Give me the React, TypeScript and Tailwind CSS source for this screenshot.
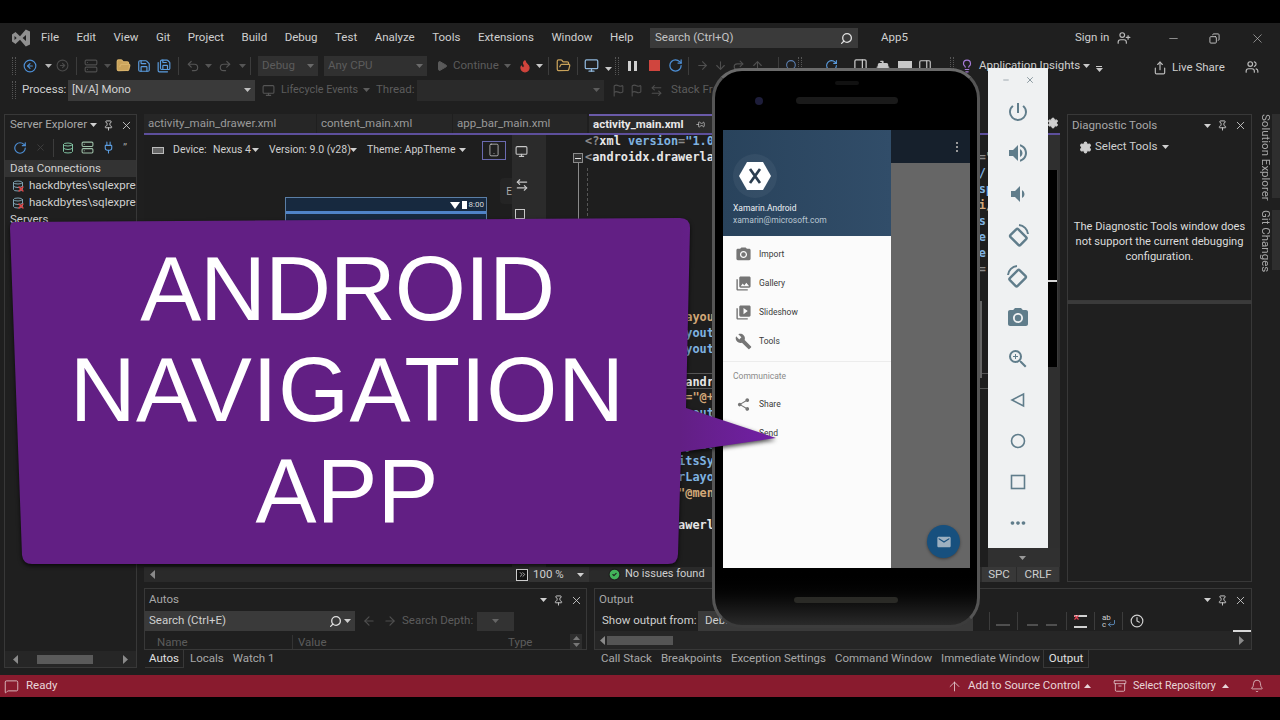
import React from "react";
import {
  CircleArrowLeft,
  CircleArrowRight,
  FolderOpen,
  Save,
  SaveAll,
  Undo2,
  Redo2,
  Play,
  RotateCw,
  Search,
  Pin,
  X,
  Minus,
  Copy,
  ArrowRight,
  ArrowLeft,
  ArrowUp,
  ArrowDown,
  Settings,
  Smartphone,
  Flame,
  Lightbulb,
  Share,
  UserPlus,
  Users,
  Clock,
  Bell,
  MessageSquare,
  Archive,
  CircleCheck,
  Database,
  Monitor,
  Flag,
  ArrowLeftRight,
  ChevronsRight,
  Server,
  Plug,
  Bot,
  PanelRight,
  CornerDownLeft,
} from "lucide-react";
import {
  MdPhotoCamera,
  MdPhotoLibrary,
  MdVideoLibrary,
  MdBuild,
  MdShare,
  MdEmail,
  MdPowerSettingsNew,
  MdVolumeUp,
  MdVolumeDown,
  MdZoomIn,
  MdMoreHoriz,
} from "react-icons/md";

function Caret({ className = "text-[#b5b5b5]", up = false }: { className?: string; up?: boolean }) {
  return (
    <svg width="7" height="4" viewBox="0 0 7 4" className={`shrink-0 ${className}`}>
      <path d={up ? "M0 4 3.5 0 7 4Z" : "M0 0h7L3.5 4Z"} fill="currentColor" />
    </svg>
  );
}

function ArrowSide({ left = false }: { left?: boolean }) {
  return (
    <svg width="5" height="9" viewBox="0 0 5 9" className="text-[#8a8a8a] shrink-0">
      <path d={left ? "M5 0v9L0 4.5Z" : "M0 0v9l5-4.5Z"} fill="currentColor" />
    </svg>
  );
}

function VsLogo() {
  return (
    <svg width="20" height="20" viewBox="0 0 20 20" className="text-[#8f8f8f]">
      <path
        fillRule="evenodd"
        fill="currentColor"
        d="M1 6.5 4.500 4 9 8.200 14.800 1.500 19 3.500v13l-4.200 2L9 11.800 4.500 16 1 13.500ZM3.500 8v4l2.200-2ZM15 7l-3.400 3 3.400 3Z"
      />
    </svg>
  );
}

function Grip() {
  return <div className="w-[4px] h-[18px] border-x border-dotted border-[#555] shrink-0" />;
}

function Sep() {
  return <div className="w-px h-[18px] bg-[#3c3c3c] shrink-0" />;
}

function PanelTools() {
  return (
    <div className="flex items-center gap-[6px] text-[#d0d0d0]">
      <Caret className="text-[#d0d0d0]" />
      <Pin size={11} />
      <X size={13} strokeWidth={1.6} />
    </div>
  );
}

function MenuBar() {
  const items = ["File", "Edit", "View", "Git", "Project", "Build", "Debug", "Test", "Analyze", "Tools", "Extensions", "Window", "Help"];
  return (
    <div className="h-[29px] pt-[1px] flex items-center pl-[11px] shrink-0">
      <VsLogo />
      <div className="w-[609px] ml-[10px] flex gap-[17.5px] text-[#cfcfcf]">
        {items.map((m) => (
          <span key={m}>{m}</span>
        ))}
      </div>
      <div className="w-[208px] h-[20px] bg-[#3a3a3a] flex items-center justify-between px-[5px] text-[#c4c4c4]">
        <span>Search (Ctrl+Q)</span>
        <Search size={13} className="text-[#e0e0e0] -scale-x-100" strokeWidth={2.4} />
      </div>
      <span className="ml-[23px] w-[40px] text-[#cfcfcf]">App5</span>
      <span className="ml-[154px] w-[34px] text-[#cfcfcf]">Sign in</span>
      <UserPlus size={14} className="ml-[8px] text-[#bcbcbc]" />
      <Minus size={13} className="ml-[36px] text-[#c8c8c8]" strokeWidth={1.2} />
      <Copy size={11} className="ml-[29px] text-[#c8c8c8] -scale-x-100" />
      <X size={15} className="ml-[30px] text-[#c8c8c8]" strokeWidth={1} />
    </div>
  );
}

function DebugBar() {
  return (
    <div className="h-[27px] flex items-center pl-[12px] shrink-0">
      <Grip />
      <CircleArrowLeft size={14} className="ml-[7px] text-[#4d8fd6]" />
      <Caret className="ml-[8px] text-[#b5b5b5]" />
      <CircleArrowRight size={13} className="ml-[4px] text-[#4a4a4a]" />
      <div className="ml-[7px]"><Sep /></div>
      <Server size={14} className="ml-[7px] text-[#4f4f4f]" />
      <Caret className="ml-[6px] text-[#4f4f4f]" />
      <FolderOpen size={15} className="ml-[5px] text-[#d8b26a]" fill="#c9a25a" />
      <Save size={14} className="ml-[6px] text-[#5b9de0]" />
      <SaveAll size={14} className="ml-[6px] text-[#5b9de0]" />
      <div className="ml-[7px]"><Sep /></div>
      <Undo2 size={14} className="ml-[7px] text-[#555]" />
      <Caret className="ml-[5px] text-[#555]" />
      <Redo2 size={14} className="ml-[6px] text-[#555]" />
      <Caret className="ml-[7px] text-[#555]" />
      <div className="ml-[4px]"><Sep /></div>
      <div className="ml-[7px] w-[60px] h-[20px] bg-[#303030] flex items-center justify-between px-[4px] text-[#5c5c5c]">
        <span>Debug</span>
        <Caret className="text-[#6a6a6a]" />
      </div>
      <div className="ml-[6px] w-[103px] h-[20px] bg-[#303030] flex items-center justify-between px-[4px] text-[#5c5c5c]">
        <span>Any CPU</span>
        <Caret className="text-[#6a6a6a]" />
      </div>
      <Play size={12} className="ml-[9px] text-[#5a5a5a]" fill="currentColor" />
      <span className="ml-[5px] w-[46px] text-[#5c5c5c]">Continue</span>
      <Caret className="ml-[5px] text-[#5c5c5c]" />
      <Flame size={14} className="ml-[7px] text-[#d0443c]" fill="#d0443c" />
      <Caret className="ml-[4px] text-[#c8c8c8]" />
      <div className="ml-[5px]"><Sep /></div>
      <FolderOpen size={15} className="ml-[7px] text-[#c9a25a]" />
      <div className="ml-[6px]"><Sep /></div>
      <Monitor size={15} className="ml-[6px] text-[#8fb7dc]" />
      <Caret className="ml-[6px] mt-[6px] text-[#c8c8c8]" />
      <div className="ml-[3px]"><Grip /></div>
      <div className="ml-[9px] w-[3px] h-[10px] bg-[#d0d0d0] shadow-[6px_0_0_#d0d0d0]" />
      <div className="ml-[18px] w-[11px] h-[11px] bg-[#d0453e]" />
      <RotateCw size={15} className="ml-[8px] text-[#4d8fd6]" />
      <div className="ml-[5px]"><Sep /></div>
      <ArrowRight size={13} className="ml-[7px] text-[#4f4f4f]" />
      <ArrowDown size={13} className="ml-[5px] text-[#4f4f4f]" />
      <Redo2 size={13} className="ml-[5px] text-[#4f4f4f]" />
      <ArrowUp size={13} className="ml-[6px] text-[#4f4f4f]" />
      <div className="ml-[14px]"><Sep /></div>
      <Search size={13} className="ml-[6px] text-[#5b7fb0]" />
      <Grip />
      <RotateCw size={13} className="ml-[23px] text-[#5b9de0]" />
      <PanelRight size={15} className="ml-[15px] text-[#c8c8c8]" />
      <Bot size={14} className="ml-[8px] text-[#c8c8c8]" fill="currentColor" />
      <div className="ml-[8px] w-[14px] h-[9px] bg-[#c8c8c8]" />
      <PanelRight size={14} className="ml-[6px] text-[#c8c8c8]" />
      <div className="ml-[18px]"><Grip /></div>
      <Lightbulb size={14} className="ml-[6px] text-[#a77bd8]" />
      <span className="ml-[5px] w-[99px] text-[#cfcfcf]">Application Insights</span>
      <Caret className="ml-[5px] text-[#c8c8c8]" />
      <div className="ml-[6px] mt-[6px] w-[6px] h-[5px] border-t border-[#c8c8c8] flex justify-center"><Caret className="mt-[1px] text-[#c8c8c8]" /></div>
      <Share size={14} className="ml-[51px] mt-[4px] text-[#bcbcbc]" />
      <span className="ml-[5px] mt-[4px] w-[50px] text-[#cfcfcf]">Live Share</span>
      <Users size={14} className="ml-[23px] mt-[2px] text-[#bcbcbc]" />
    </div>
  );
}

function ProcessBar() {
  return (
    <div className="h-[22px] flex items-center pl-[12px] shrink-0">
      <Grip />
      <span className="ml-[6px] w-[40px] text-[#cfcfcf]">Process:</span>
      <div className="ml-[6px] w-[187px] h-[21px] bg-[#3a3a3a] flex items-center justify-between px-[4px] text-[#d0d0d0]">
        <span>[N/A] Mono</span>
        <Caret className="text-[#c0c0c0]" />
      </div>
      <Monitor size={13} className="ml-[7px] text-[#555]" />
      <span className="ml-[6px] w-[77px] text-[#5c5c5c] text-[10.8px]">Lifecycle Events</span>
      <Caret className="ml-[5px] text-[#5c5c5c]" />
      <span className="ml-[6px] w-[36px] text-[#5c5c5c]">Thread:</span>
      <div className="ml-[5px] w-[187px] h-[21px] bg-[#2a2a2a] flex items-center justify-end px-[4px]">
        <Caret className="text-[#5c5c5c]" />
      </div>
      <Flag size={13} className="ml-[8px] text-[#4f4f4f]" />
      <Flag size={13} className="ml-[5px] text-[#4f4f4f]" />
      <ArrowLeftRight size={13} className="ml-[7px] text-[#4f4f4f]" />
      <span className="ml-[8px] text-[#5c5c5c]">Stack Frame:</span>
    </div>
  );
}

function ServerExplorer() {
  return (
    <div className="w-[133px] ml-[4px] border border-[#383838] flex flex-col">
      <div className="h-[20px] flex items-center justify-between pl-[5px] pr-[3px] text-[#a8a8a8]">
        <span>Server Explorer</span>
        <PanelTools />
      </div>
      <div className="h-[25px] flex items-center pl-[8px]">
        <RotateCw size={14} className="text-[#4d8fd6]" />
        <X size={11} className="ml-[8px] text-[#3f3f3f]" />
        <div className="ml-[7px]"><Sep /></div>
        <Database size={12} className="ml-[8px] text-[#7fc0a0]" />
        <Server size={13} className="ml-[7px] text-[#9ec0a8]" />
        <Plug size={13} className="ml-[8px] text-[#5b9de0]" />
        <span className="ml-[8px] text-[#999] leading-none">”</span>
      </div>
      <div className="h-[17px] bg-[#333] flex items-center pl-[5px] text-[#d0d0d0]">Data Connections</div>
      {["a", "b"].map((key) => (
        <div key={key} className="h-[17px] flex items-center pl-[7px] gap-[5px] text-[#d0d0d0] whitespace-nowrap overflow-hidden">
          <div className="relative shrink-0">
            <Database size={12} className="text-[#7da0b0]" />
            <X size={8} className="absolute left-[5px] top-[5px] text-[#e04040]" strokeWidth={4} />
          </div>
          <span>hackdbytes\sqlexpress</span>
        </div>
      ))}
      <div className="h-[17px] flex items-center pl-[5px] text-[#d0d0d0]">Servers</div>
      <div className="flex-1" />
      <div className="h-[16px] bg-[#262626] flex items-center px-[8px]">
        <ArrowSide left />
        <div className="ml-[19px] w-[56px] h-[9px] bg-[#5a5a5a]" />
        <div className="flex-1" />
        <ArrowSide />
      </div>
    </div>
  );
}

function EditorTabs() {
  return (
    <div className="h-[19px] flex text-[#9a9a9a] shrink-0">
      <div className="w-[172px] bg-[#262626] pl-[4px] flex items-center">activity_main_drawer.xml</div>
      <div className="w-[135px] ml-px bg-[#262626] pl-[4px] flex items-center">content_main.xml</div>
      <div className="w-[134px] ml-px bg-[#262626] pl-[4px] flex items-center">app_bar_main.xml</div>
      <div className="ml-[2px] w-[150px] border-t-2 border-[#6a5aa8] bg-[#2a2a2a] pl-[4px] flex items-center gap-[12px] text-[#e8e8e8] font-bold">
        <span>activity_main.xml</span>
        <Pin size={9} className="rotate-90 text-[#c0c0c0]" />
        <X size={10} />
      </div>
      <div className="flex-1" />
      <Settings size={12} className="mt-[3px] mr-[1px] text-[#cfcfcf]" fill="currentColor" />
    </div>
  );
}

function Designer() {
  return (
    <div className="w-[368px] flex flex-col shrink-0 overflow-hidden">
      <div className="h-[30px] flex items-center pl-[8px] text-[#cfcfcf] text-[10.5px] shrink-0">
        <div className="w-[12px] h-[7px] border border-[#bbb] bg-[#666] shrink-0" />
        <span className="ml-[9px] w-[35px]">Device:</span>
        <span className="ml-[5px] w-[34px]">Nexus 4</span>
        <Caret className="ml-[5px] text-[#cfcfcf]" />
        <span className="ml-[10px] w-[76px]">Version: 9.0 (v28)</span>
        <Caret className="ml-[5px] text-[#cfcfcf]" />
        <span className="ml-[10px] w-[88px]">Theme: AppTheme</span>
        <Caret className="ml-[4px] text-[#cfcfcf]" />
        <div className="ml-[16px] w-[24px] h-[19px] border border-[#6a6ab0] flex items-center justify-center shrink-0">
          <Smartphone size={14} className="text-[#d0d0d0]" strokeWidth={1.3} />
        </div>
      </div>
      <div className="ml-[141px] mt-[32px] w-[202px] h-[180px] bg-[#17293f] border border-[#5a7ea6] pt-[1px]">
        <div className="h-[12px] flex items-center justify-end gap-[2px] pr-[2px] text-[8px] text-[#d8d8d8]">
          <svg width="10" height="7" viewBox="0 0 10 7"><path d="M0 0h10L5 7Z" fill="#fff" /></svg>
          <div className="w-[5px] h-[8px] bg-[#fff]" />
          <span>8:00</span>
        </div>
        <div className="h-[3px] bg-[#4f83c8]" />
      </div>
    </div>
  );
}

function DesignerTools() {
  return (
    <div className="relative w-[34px] bg-[#2b2b2b] flex flex-col pt-[10px] pl-[3px] shrink-0 text-[#c8c8c8]">
      <Monitor size={13} />
      <ArrowLeftRight size={14} className="mt-[20px]" />
      <div className="mt-[17px] w-[10px] h-[10px] border border-[#c8c8c8]" />
      <div className="absolute -left-[12px] top-[43px] w-[12px] h-[26px] rounded-l-[4px] bg-[#242424] flex items-center justify-end text-[#aaa] text-[10px]">E</div>
    </div>
  );
}

type Seg = [string, string];

const k = "text-[#e6e6e6]";
const a = "text-[#d2a878]";
const b = "text-[#7fb2e0]";
const g = "text-[#8a8a8a]";
const pad = " ".repeat(55);

const codeLines: Seg[][] = [
  [["<?", g], ["xml ", k], ["version", b], ["=", g], ['"1.0"', b]],
  [["<", g], ["androidx.drawerlayout.widget.DrawerLayout", k], ["xmlns:android", b], ["=", g], ['"http://schemas.android.com', a]],
  [[pad + "/", b]],
  [[pad + "sp", b]],
  [[pad + "i/", a]],
  [[pad + "s", b]],
  [[pad + "e", b]],
  [[pad + "e", b]],
  [[pad + "=", g]],
  [],
  [],
  [["     android:l", b], ['ayout_width="match_parent"', a]],
  [["    android:layout_height=", b], ['"match_parent"', a]],
  [["    android:layout_gravity=", b], ['"start"', a]],
  [],
  [["             <", g], ["androidx.drawerlayout", k]],
  [["    android:id", b], ['="@+id/nav_view"', a]],
  [["    android:layout_width=", b], ['"wrap_content"', a]],
  [],
  [["    android:layout_height=", b], ['"match_parent"', a]],
  [["    android:fitsSystemWindows=", b], ['"true"', a]],
  [["    app:headerLayout=", b], ['"@layout/nav_header"', a]],
  [["    app:menu=", b], ['"@menu/activity_main"', a]],
  [],
  [["</", g], ["androidx.drawerlayout", k]],
];

function CodeEditor() {
  return (
    <div className="flex-1 relative overflow-hidden pl-[39px] font-['DejaVu_Sans_Mono',monospace] font-bold text-[11.9px] leading-[16px] whitespace-pre">
      <div className="-mt-[2px]">
        {codeLines.map((line, i) => (
          <div key={i} className={i === 15 ? "h-[16px] border-y border-[#555]" : "h-[16px]"}>
            {line.map(([t, c], j) => (
              <span key={j} className={c}>{t}</span>
            ))}
          </div>
        ))}
      </div>
      <div className="absolute left-[27px] top-[18px] w-[10px] h-[10px] border border-[#8a8a8a] bg-[#333] flex items-center justify-center">
        <div className="w-[6px] h-px bg-[#e0e0e0]" />
      </div>
      <div className="absolute left-[32px] top-[28px] w-px h-[400px] bg-[#8a8a8a]" />
      <div className="absolute left-[41px] top-[33px] h-[48px] border-l border-dashed border-[#555]" />
    </div>
  );
}

function EditorScrollColumn() {
  return (
    <div className="w-[12px] bg-[#2f2f2f] shrink-0 pt-[35px]">
      <div className="w-[10px] h-[197px] bg-black border-r border-[#3a3a3a] pt-[110px]">
        <div className="h-[2px] bg-[#d8d8d8]" />
      </div>
    </div>
  );
}

function EditorStatus() {
  return (
    <div className="h-[15px] bg-[#2a2a2a] flex items-center text-[#cfcfcf] shrink-0">
      <div className="ml-[6px]"><ArrowSide left /></div>
      <div className="ml-[361px] w-[12px] h-[12px] border border-[#ccc] bg-[#111] flex items-center justify-center shrink-0">
        <ChevronsRight size={9} className="text-[#ddd]" />
      </div>
      <div className="ml-px w-[60px] flex items-center justify-between bg-[#333] pl-[4px] pr-[5px] h-[15px]">
        <span>100 %</span>
        <Caret className="text-[#cfcfcf]" />
      </div>
      <CircleCheck size={13} className="ml-[19px] text-[#1f1f1f]" fill="#42b35a" />
      <span className="ml-[4px] w-[79px] text-[11px]">No issues found</span>
      <div className="w-[278px] shrink-0" />
      <div className="w-[34px] h-[15px] bg-[#383838] flex items-center justify-center">SPC</div>
      <div className="ml-px w-[42px] h-[15px] bg-[#383838] flex items-center justify-center">CRLF</div>
    </div>
  );
}

function CenterPane() {
  return (
    <div className="w-[916px] flex flex-col shrink-0">
      <EditorTabs />
      <div className="h-[2px] bg-[#5d4f9c] shrink-0" />
      <div className="flex-1 flex min-h-0 bg-[#1e1e1e]">
        <Designer />
        <DesignerTools />
        <CodeEditor />
        <EditorScrollColumn />
      </div>
      <EditorStatus />
    </div>
  );
}

function DiagnosticPane() {
  return (
    <div className="w-[185px] ml-[7px] flex flex-col shrink-0">
      <div className="h-[187px] border border-[#383838] flex flex-col shrink-0">
        <div className="h-[21px] flex items-center justify-between px-[4px] text-[#a8a8a8]">
          <span>Diagnostic Tools</span>
          <PanelTools />
        </div>
        <div className="h-[22px] flex items-center pl-[11px] text-[#cfcfcf]">
          <Settings size={13} className="text-[#cfcfcf]" fill="currentColor" />
          <span className="ml-[3px]">Select Tools</span>
          <Caret className="ml-[5px] text-[#cfcfcf]" />
        </div>
        <p className="mt-[61px] text-center text-[#dcdcdc] text-[11.1px] leading-[15px] px-[2px] whitespace-normal">
          The Diagnostic Tools window does not support the current debugging configuration.
        </p>
      </div>
      <div className="h-[3px] bg-[#3a3a3a] shrink-0" />
      <div className="flex-1 border border-[#383838] border-t-0" />
    </div>
  );
}

function SideTabs() {
  return (
    <div className="w-[23px] ml-[5px] flex flex-col text-[#a8a8a8] shrink-0">
      <span className="[writing-mode:vertical-rl] h-[84px] w-[23px] border-l-[8px] border-[#2e2e2e] -scale-x-100">
        <span className="block -scale-x-100 h-full">Solution Explorer</span>
      </span>
      <span className="[writing-mode:vertical-rl] mt-[12px] h-[60px] w-[23px] border-l-[8px] border-[#2e2e2e] -scale-x-100">
        <span className="block -scale-x-100 h-full">Git Changes</span>
      </span>
    </div>
  );
}

function AutosPane() {
  return (
    <div className="w-[443px] flex flex-col shrink-0">
      <div className="h-[62px] border border-[#383838] flex flex-col">
        <div className="h-[22px] flex items-center justify-between pl-[4px] pr-[3px] text-[#a8a8a8] shrink-0">
          <span>Autos</span>
          <PanelTools />
        </div>
        <div className="h-[20px] flex items-center shrink-0">
          <div className="w-[210px] h-[20px] bg-[#3a3a3a] flex items-center justify-between px-[4px] text-[#cfcfcf]">
            <span>Search (Ctrl+E)</span>
            <div className="flex items-center gap-[2px]">
              <Search size={13} className="text-[#e0e0e0] -scale-x-100" strokeWidth={2.4} />
              <Caret className="text-[#cfcfcf]" />
            </div>
          </div>
          <ArrowLeft size={14} className="ml-[7px] text-[#4f4f4f]" />
          <ArrowRight size={14} className="ml-[7px] text-[#4f4f4f]" />
          <span className="ml-[5px] w-[69px] text-[#5c5c5c]">Search Depth:</span>
          <div className="ml-[6px] w-[37px] h-[19px] bg-[#333] flex items-center justify-center">
            <Caret className="text-[#666]" />
          </div>
        </div>
        <div className="flex-1 min-h-0 flex items-center pl-[12px] pt-[3px] text-[#5c5c5c] leading-[14px]">
          <span className="w-[136px] border-r border-[#333]">Name</span>
          <span className="ml-[5px] w-[205px]">Value</span>
          <span className="ml-[5px] flex-1">Type</span>
          <div className="w-[12px] h-full bg-[#2e2e2e] flex flex-col items-center justify-between py-[2px] mr-[4px]">
            <Caret up className="text-[#777]" />
            <Caret className="text-[#777]" />
          </div>
        </div>
      </div>
      <div className="h-[18px] flex items-center pl-[1px] text-[#a8a8a8]">
        <span className="px-[4px] h-[18px] flex items-center text-[#e0e0e0] border-r border-b border-[#383838]">Autos</span>
        <span className="ml-[6px]">Locals</span>
        <span className="ml-[9px]">Watch 1</span>
      </div>
    </div>
  );
}

function OutputPane() {
  const tabs = ["Call Stack", "Breakpoints", "Exception Settings", "Command Window", "Immediate Window"];
  return (
    <div className="ml-[7px] w-[658px] flex flex-col shrink-0">
      <div className="h-[62px] border border-[#383838] flex flex-col">
        <div className="h-[22px] flex items-center justify-between px-[4px] text-[#a8a8a8] shrink-0">
          <span>Output</span>
          <PanelTools />
        </div>
        <div className="h-[20px] flex items-center pl-[7px] text-[#cfcfcf] shrink-0">
          <span className="w-[94px]">Show output from:</span>
          <div className="ml-[2px] w-[275px] h-[20px] bg-[#3a3a3a] pl-[7px] flex items-center justify-between pr-[4px]">
            <span>Debug</span>
            <Caret className="text-[#cfcfcf]" />
          </div>
          <div className="ml-[16px]"><Sep /></div>
          <div className="ml-[6px] w-[14px] h-[10px] border-b-2 border-[#4f4f4f]" />
          <div className="ml-[7px]"><Sep /></div>
          <div className="ml-[9px] w-[11px] h-[10px] border-b-2 border-[#4f4f4f]" />
          <div className="ml-[8px] w-[11px] h-[10px] border-b-2 border-[#4f4f4f]" />
          <div className="ml-[9px]"><Sep /></div>
          <div className="ml-[7px] w-[13px] h-[13px] border-y-2 border-[#d0d0d0] relative">
            <X size={7} className="absolute -left-[1px] -top-[3px] text-[#e04050]" strokeWidth={4} />
          </div>
          <div className="ml-[7px]"><Sep /></div>
          <div className="ml-[7px] w-[14px] relative">
            <span className="block text-[8px] leading-[7px] text-[#cfcfcf]">ab<br />c</span>
            <CornerDownLeft size={9} className="absolute left-[5px] top-[5px] text-[#6aa6e0]" />
          </div>
          <div className="ml-[6px]"><Sep /></div>
          <Clock size={14} className="ml-[7px] text-[#d0d0d0]" />
        </div>
        <div className="relative flex-1 min-h-0 bg-[#262626] flex items-center pl-[5px] pr-[7px]">
          <div className="absolute right-0 -top-[1px] w-[18px] h-[2px] bg-[#d8d8d8]" />
          <ArrowSide left />
          <div className="ml-[2px] w-[66px] h-[9px] bg-[#555]" />
          <div className="flex-1" />
          <ArrowSide />
        </div>
      </div>
      <div className="h-[18px] flex items-center pl-[7px] text-[#a8a8a8] gap-[9px]">
        {tabs.map((t) => (
          <span key={t}>{t}</span>
        ))}
        <span className="-ml-[6px] px-[5px] h-[18px] flex items-center text-[#e0e0e0] border-x border-b border-[#383838]">Output</span>
      </div>
    </div>
  );
}

function StatusBar() {
  return (
    <div className="h-[22px] bg-[#891b2e] flex items-center text-[#e8d5d8] shrink-0">
      <MessageSquare size={15} className="ml-[4px]" strokeWidth={1.3} />
      <span className="ml-[7px]">Ready</span>
      <div className="flex-1" />
      <ArrowUp size={15} strokeWidth={1.3} />
      <span className="ml-[6px] w-[111px]">Add to Source Control</span>
      <Caret up className="ml-[5px] text-[#e8d5d8]" />
      <Archive size={14} className="ml-[22px]" strokeWidth={1.3} />
      <span className="ml-[6px] w-[84px] text-[10.7px]">Select Repository</span>
      <Caret up className="ml-[5px] text-[#e8d5d8]" />
      <Bell size={14} className="ml-[21px] mr-[16px]" strokeWidth={1.3} />
    </div>
  );
}

function XamarinLogo() {
  return (
    <div className="w-[44px] h-[44px] rounded-full bg-[#ffffff0d] flex items-center justify-center">
      <svg width="32" height="28" viewBox="0 0 32 28">
        <path d="M8 0h16l8 14-8 14H8L0 14Z" fill="#fff" />
        <path d="M11 7 16 14 11 21M21 7 16 14 21 21" fill="none" stroke="#2b3d4f" strokeWidth="2.700" />
      </svg>
    </div>
  );
}

function DrawerItem({ icon, label }: { icon: React.ReactNode; label: string }) {
  return (
    <div className="h-[29px] flex items-center pl-[11px] text-[#3a3a3a]">
      <div className="w-[18px] flex justify-center text-[#757575]">{icon}</div>
      <span className="ml-[7px]">{label}</span>
    </div>
  );
}

function PhoneOverlay() {
  return (
    <div className="absolute left-[712px] top-[68px] w-[268px] h-[560px] rounded-[30px] bg-gradient-to-b from-black from-90% to-[#2a2a2a] border-[3px] border-[#555] border-t-[#6a6a6a] border-b-[#3c3c3c] px-[8px] font-['Roboto',sans-serif]">
      <div className="absolute -right-[5px] top-[230px] w-[2px] h-[77px] bg-[#666]" />
      <div className="h-[59px] relative">
        <div className="absolute left-[32px] top-[26px] w-[8px] h-[8px] rounded-full bg-[#1d1d3a]" />
        <div className="absolute left-[73px] top-[26px] w-[102px] h-[7px] rounded-full bg-[#1a1a1a]" />
        <div className="absolute left-[112px] top-[10px] w-[24px] h-[4px] rounded-full bg-[#111]" />
      </div>
      <div className="w-[247px] h-[438px] flex text-[8.5px] overflow-hidden">
        <div className="w-[168px] bg-[#fbfbfb] flex flex-col">
          <div className="h-[106px] bg-gradient-to-r from-[#29435c] to-[#314d69] pl-[10px] pt-[24px] shrink-0">
            <XamarinLogo />
            <div className="mt-[4px] text-[#eef2f5] leading-[12px]">Xamarin.Android</div>
            <div className="text-[#b9c6d2] leading-[12px]">xamarin@microsoft.com</div>
          </div>
          <div className="pt-[4px] shrink-0">
            <DrawerItem icon={<MdPhotoCamera size={17} />} label="Import" />
            <DrawerItem icon={<MdPhotoLibrary size={17} />} label="Gallery" />
            <DrawerItem icon={<MdVideoLibrary size={17} />} label="Slideshow" />
            <DrawerItem icon={<MdBuild size={17} />} label="Tools" />
          </div>
          <div className="mt-[5px] h-px bg-[#ececec] shrink-0" />
          <div className="h-[28px] flex items-center pl-[10px] text-[#8a8a8a]">Communicate</div>
          <DrawerItem icon={<MdShare size={15} />} label="Share" />
          <DrawerItem icon={null} label="Send" />
        </div>
        <div className="flex-1 bg-[#666] flex flex-col">
          <div className="h-[33px] bg-[#16202c] flex justify-end items-center pr-[12px] shrink-0">
            <div className="flex flex-col gap-[2px]">
              <div className="w-[2px] h-[2px] bg-[#999]" />
              <div className="w-[2px] h-[2px] bg-[#999]" />
              <div className="w-[2px] h-[2px] bg-[#999]" />
            </div>
          </div>
          <div className="flex-1 flex items-end justify-end pr-[10px] pb-[10px]">
            <div className="w-[33px] h-[33px] rounded-full bg-[#17507e] flex items-center justify-center text-[#9db0c0] shadow-[0_1px_3px_rgba(0,0,0,0.4)]">
              <MdEmail size={16} />
            </div>
          </div>
        </div>
      </div>
      <div className="h-[57px] flex items-start justify-center pt-[29px]">
        <div className="w-[104px] h-[6px] rounded-full bg-[#2a2a26]" />
      </div>
    </div>
  );
}

function RotateIcon({ flip = false }: { flip?: boolean }) {
  return (
    <svg width="24" height="24" viewBox="0 0 24 24" fill="none" stroke="#607d8b" className={flip ? "-scale-x-100" : ""}>
      <rect x="6" y="7" width="11" height="14" rx="1.500" strokeWidth="2.400" transform="rotate(-45 12 13)" />
      <path d="M13 2a10 10 0 0 1 9 9" strokeWidth="2" />
    </svg>
  );
}

function EmulatorBar() {
  const btn = "h-[41.1px] flex items-center justify-center text-[#607d8b]";
  return (
    <div className="absolute left-[988px] top-[68px] w-[72px]">
      <div className="w-[60px] h-[480px] bg-[#eff1f2] flex flex-col">
        <div className="h-[23.5px] flex items-center justify-between pl-[14px] pr-[13px] text-[#7a8a92] shrink-0">
          <Minus size={8} strokeWidth={2} />
          <X size={10} strokeWidth={2} />
        </div>
        <div className={btn}><MdPowerSettingsNew size={24} /></div>
        <div className={btn}><MdVolumeUp size={24} /></div>
        <div className={btn}><MdVolumeDown size={24} /></div>
        <div className={btn}><RotateIcon /></div>
        <div className={btn}><RotateIcon flip /></div>
        <div className={btn}><MdPhotoCamera size={24} /></div>
        <div className={btn}><MdZoomIn size={24} /></div>
        <div className={btn}>
          <svg width="16" height="16" viewBox="0 0 16 16" fill="none" stroke="#607d8b" strokeWidth="1.600"><path d="M13.500 2v12L2 8Z" /></svg>
        </div>
        <div className={btn}>
          <svg width="16" height="16" viewBox="0 0 16 16" fill="none" stroke="#607d8b" strokeWidth="1.600"><circle cx="8" cy="8" r="6.500" /></svg>
        </div>
        <div className={btn}>
          <svg width="16" height="16" viewBox="0 0 16 16" fill="none" stroke="#607d8b" strokeWidth="1.600"><rect x="1.500" y="1.500" width="13" height="13" /></svg>
        </div>
        <div className={btn}><MdMoreHoriz size={22} /></div>
      </div>
      <div className="h-[19px] bg-[#303030] flex items-center pl-[31px]">
        <Caret className="text-[#999]" />
      </div>
    </div>
  );
}

function Callout() {
  return (
    <div className="absolute left-0 top-[210px] w-[790px] h-[370px]">
      <svg width="790" height="370" viewBox="0 210 790 370" className="absolute inset-0 drop-shadow-[0_2px_2px_rgba(0,0,0,0.7)]">
        <defs>
          <linearGradient id="tip" gradientUnits="userSpaceOnUse" x1="680" y1="0" x2="776" y2="0">
            <stop offset="0" stopColor="#621f84" />
            <stop offset="1" stopColor="#7220a6" />
          </linearGradient>
        </defs>
        <path
          fill="url(#tip)"
          d="M14 222 680 218Q690 218 690 228L686 408 776 438 681 452 678 554Q678 564 668 564L32 564Q23 564 22 555L10 228Q10 222 14 222Z"
        />
      </svg>
      <div className="relative w-[694px] pt-[28px] flex flex-col items-center font-['Liberation_Sans',Arial,sans-serif] text-[91.5px] leading-[101px] text-white">
        <span className="tracking-[-1.2px]">ANDROID</span>
        <span className="tracking-[0.4px]">NAVIGATION</span>
        <span>APP</span>
      </div>
    </div>
  );
}

export default function App() {
  return (
    <div className="relative w-[1280px] h-[720px] bg-black overflow-hidden font-['Roboto',sans-serif] text-[11.5px] whitespace-nowrap">
      <div className="mt-[23px] h-[674px] bg-[#1f1f1f] flex flex-col">
        <MenuBar />
        <DebugBar />
        <ProcessBar />
        <div className="h-[13px] shrink-0" />
        <div className="flex-1 flex min-h-0">
          <ServerExplorer />
          <div className="w-[7px] shrink-0" />
          <div className="flex-1 flex flex-col min-w-0">
            <div className="h-[468px] flex shrink-0">
              <CenterPane />
              <DiagnosticPane />
              <SideTabs />
            </div>
            <div className="h-[6px] shrink-0" />
            <div className="flex">
              <AutosPane />
              <OutputPane />
            </div>
          </div>
        </div>
        <div className="h-[7px] shrink-0" />
        <StatusBar />
      </div>
      <PhoneOverlay />
      <EmulatorBar />
      <Callout />
    </div>
  );
}
